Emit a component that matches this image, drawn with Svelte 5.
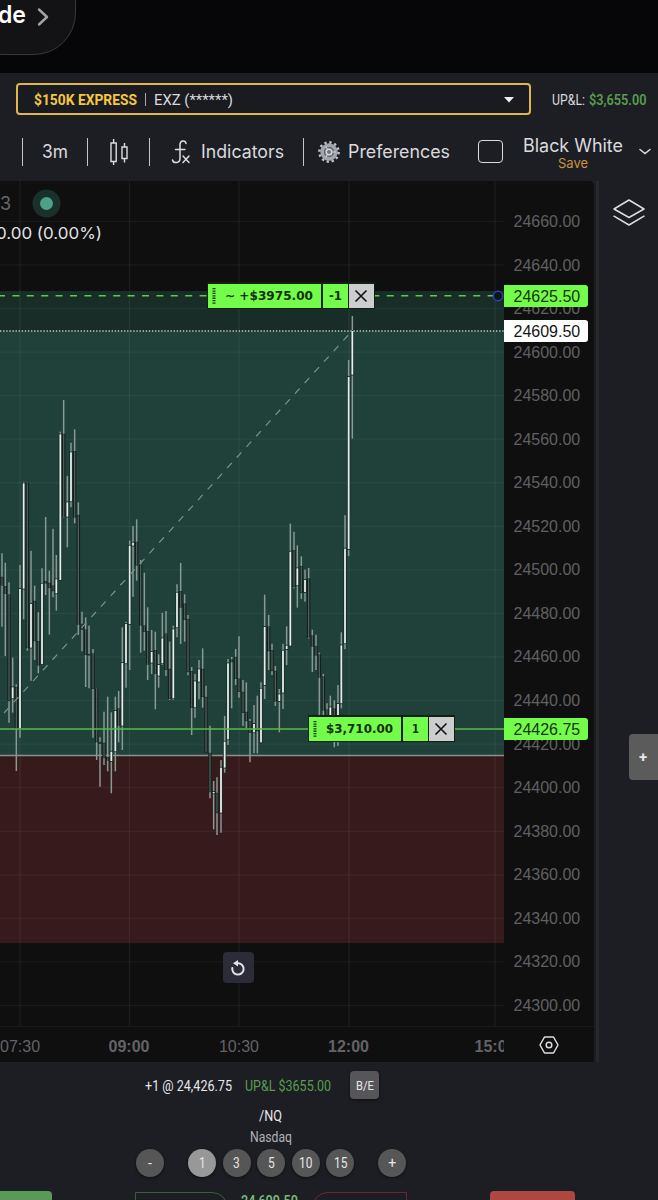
<script>
  // Candles: [x, high, low, body top, body bottom, rising]
  const scale = (rows, ox, oy) =>
    rows.map(([x, h, l, t, b, up]) => ({ x: ox + x / 3, h: oy + h / 3, l: oy + l / 3, t: oy + t / 3, b: oy + b / 3, up }));
  const morning = scale([
    [6,520,740,592,615,0],[16,548,828,620,640,0],[27,607,1028,645,962,0],[38,833,998,922,955,1],[49,913,1173,922,1046,0],
    [60,555,1073,627,1046,1],[71,305,718,310,626,1],[82,308,812,310,803,0],[93,512,902,672,803,1],[104,617,840,664,782,0],
    [115,697,880,785,855,0],[126,565,856,611,852,1],[137,411,645,605,609,0],[148,572,764,610,622,0],[159,446,652,618,632,0],
    [169,525,692,598,640,1],[181,155,600,163,600,1],[191,60,412,163,408,0],[202,288,502,367,410,1],[213,188,382,217,364,1],
    [224,148,430,215,411,0],[235,367,765,406,732,0],[246,695,814,733,748,0],[257,712,921,750,823,0],[267,737,925,823,825,0],
    [279,807,1073,822,925,0],[290,925,1140,927,1085,0],[300,1072,1220,1087,1090,0],[312,995,1155,1090,1133,0],
    [323,950,1174,1133,1140,0],[334,997,1240,1115,1143,1],[346,950,1174,993,1114,1],[356,933,1087,987,1035,0],
    [367,742,1110,849,1037,1],[378,725,923,732,850,1]
  ], 0, 380);
  const midday = scale([
    [29,122,510,137,372,1],[39,78,290,128,137,1],[50,58,242,127,195,0],[62,180,458,195,375,0],[73,218,452,378,394,0],
    [83,322,540,395,492,0],[95,390,522,456,488,1],[106,395,628,452,520,0],[116,463,563,495,527,1],[127,338,495,415,490,1],
    [138,333,528,402,508,0],[149,425,600,508,595,0],[160,377,600,388,595,1],[171,253,412,278,382,1],[182,189,432,275,321,0],
    [194,283,425,312,358,0],[204,345,526,358,515,0],[215,501,705,515,622,0],[225,522,653,544,622,1],[237,480,598,508,545,1],
    [248,445,623,508,590,0],[258,557,755,592,757,0],[270,677,895,760,875,0],[281,843,988,876,880,1],[291,832,1005,880,938,0],
    [303,780,998,803,938,1],[314,648,818,725,803,1],[324,477,735,490,718,1],[335,471,625,480,485,0],[347,447,555,472,535,0],
    [357,409,593,537,574,0],[369,540,678,577,637,0],[379,547,685,637,662,0]
  ], 120, 500);
  const noon = scale([
    [30,657,787,665,697,0],[42,615,760,672,697,1],[52,587,760,687,692,0],[63,547,728,566,727,1],[74,284,597,381,555,1],
    [86,345,510,381,452,0],[96,431,525,452,512,0],[106,498,618,514,603,0],[118,567,697,583,603,1],[129,431,627,452,578,1],
    [140,379,495,437,447,1],[151,71,437,155,437,1],[162,95,265,152,260,0],[172,136,323,205,256,1],[184,169,297,200,278,0],
    [195,209,305,240,276,1],[206,204,416,237,411,0],[217,389,516,408,438,0],[228,404,510,440,465,0],[238,458,645,465,531,0],
    [250,522,680,531,630,0],[261,610,680,630,650,0],[271,587,700,622,680,1],[283,601,742,627,700,0],[294,555,738,612,720,1],
    [304,397,625,436,610,1],[315,46,448,146,430,1],[326,-420,168,-369,147,1],[337,-552,-184,-507,-376,1]
  ], 240, 500);
  const candles = [...morning, ...midday, ...noon];

  const prices = Array.from({ length: 19 }, (_, i) => 24660 - i * 20);
  const columns = [20, 129.5, 239, 349, 495];
  const times = [
    { x: 20, label: '07:30' }, { x: 129, label: '09:00', major: true }, { x: 239, label: '10:30' },
    { x: 348.5, label: '12:00', major: true }, { x: 495, label: '15:00', major: true }
  ];
  const rowStep = 43.56;
  const firstRow = 221;
  let quantity = $state('1');
</script>

{#snippet fit(text, width, size, cls)}
  <svg class="fit {cls}" {width} height={size * 1.2}>
    <text x="0" y={size * 0.96} font-size={size} textLength={width} lengthAdjust="spacingAndGlyphs">{text}</text>
  </svg>
{/snippet}

{#snippet cross()}
  <svg width="14" height="14" viewBox="0 0 14 14"><path d="M1.500 1.500l11 11M12.500 1.500l-11 11" stroke="#111" stroke-width="1.600" /></svg>
{/snippet}

{#snippet grip()}
  <svg width="4" height="16" viewBox="0 0 4 16"><path d="M2 0v16" stroke="#173d10" stroke-width="3" stroke-dasharray="1.300 1.100" /></svg>
{/snippet}

<div class="page">
  <header>
    <div class="pill">
      {@render fit('de', 28, 24, 'inter semi')}
      <svg width="14" height="20" viewBox="0 0 14 20"><path d="M2 2.500l8 7.500-8 7.500" fill="none" stroke="#a3a3a6" stroke-width="2.400" stroke-linecap="round" stroke-linejoin="round" /></svg>
    </div>
  </header>

  <div class="account">
    <div class="select">
      {@render fit('$150K EXPRESS', 103, 15.2, 'roboto bold gold')}
      <i></i>
      {@render fit('EXZ (******)', 79, 15.2, 'roboto light')}
      <svg class="caret" width="10" height="6"><path d="M0 0h10L5 5.600z" fill="#f0f0f2" /></svg>
    </div>
    <div class="upl">
      {@render fit('UP&L:', 33, 14, 'roboto light')}
      {@render fit('$3,655.00', 57.5, 14, 'roboto green semibold')}
    </div>
  </div>

  <div class="toolbar">
    <b class="sep s1"></b>
    <div class="t-interval">{@render fit('3m', 26, 18, 'inter tool')}</div>
    <b class="sep s2"></b>
    <svg class="t-candles" width="20" height="28" viewBox="0 0 20 28" fill="none" stroke="#dcdce0" stroke-width="1.400">
      <path d="M2 5h5.200v18.500H2zM4.600 1v4M4.600 23.500v3.500M13 9h5v11.500h-5zM15.500 5v4M15.500 20.500v4" />
    </svg>
    <b class="sep s3"></b>
    <svg class="t-fx" width="20" height="26" viewBox="0 0 20 26" fill="none" stroke="#dcdce0" stroke-width="1.500" stroke-linecap="round">
      <path d="M15 4.500C14.500 1 9.200.800 9 5.500V19.500C9 24.500 2.500 24.800 1.500 21M4.500 10.500H14M12 17l6 6.500M18 17l-6 6.500" />
    </svg>
    <div class="t-ind">{@render fit('Indicators', 83, 18, 'inter tool')}</div>
    <b class="sep s4"></b>
    <svg class="t-gear" width="22" height="22" viewBox="-11 -11 22 22" fill="none">
      <circle r="9.600" stroke="#bfc2c6" stroke-width="2.600" stroke-dasharray="2.300 2.726" />
      <circle r="6.800" stroke="#a2a6ab" stroke-width="3.800" />
      <circle r="5" fill="#6a6e74" />
      <circle r="2.800" fill="#70757b" stroke="#d5d8dc" stroke-width="1.500" />
      <path d="M3.500 0h3M-1.800 3l-1.400 2.600M-1.800-3l-1.400-2.600" stroke="#c3c6ca" stroke-width="1.400" />
    </svg>
    <div class="t-pref">{@render fit('Preferences', 102, 18, 'inter tool')}</div>
    <span class="box"></span>
    <div class="layout">
      {@render fit('Black White', 100, 18, 'inter tool')}
      {@render fit('Save', 30, 13.4, 'inter save')}
    </div>
    <svg class="t-chev" width="12" height="7"><path d="M1 1.500l5 4 5-4" fill="none" stroke="#dcdce0" stroke-width="1.500" stroke-linecap="round" /></svg>
  </div>

  <main>
    <section class="chart">
      <div class="plot">
        <svg class="canvas" width="504" height="845" viewBox="0 181 504 845">
          <rect x="0" y="291" width="504" height="40" fill="#192d28" />
          <rect x="0" y="331" width="504" height="424" fill="#1f4139" />
          <rect x="0" y="755" width="504" height="188" fill="#371a1c" />
          {#each columns as x}<path d="M{x} 181V1026" stroke="#fff" stroke-opacity=".055" stroke-width="1.300" />{/each}
          {#each prices as p, i}<path d="M0 {firstRow + .4 + i * rowStep}H504" stroke="#fff" stroke-opacity=".045" stroke-width="1.300" />{/each}
          <path d="M0 755.500H504" stroke="#8b918f" stroke-width="1.300" />
          {#each candles as c}
            <path d="M{c.x} {c.h}V{c.l}" stroke="#899994" stroke-width="1.500" />
            {#if c.up}
              <rect x={c.x - 1.700} y={c.t - .8} width="3.400" height={Math.max(2, c.b - c.t + 1.600)} fill="#142b26" />
              <rect x={c.x - .9} y={c.t} width="1.800" height={Math.max(1, c.b - c.t)} fill="#e6eeea" />
            {:else}
              <rect x={c.x - 1.700} y={c.t - .5} width="3.400" height={Math.max(1.500, c.b - c.t + 1)} fill="#13211e" />
              <rect x={c.x - .6} y={c.t} width="1.200" height={Math.max(.5, c.b - c.t)} fill="#55605e" />
            {/if}
          {/each}
          <path d="M4 713L352 331" stroke="#7c928b" stroke-width="1.200" stroke-dasharray="7 7.400" />
          <path d="M0 331H504" stroke="#b9c7c2" stroke-width="1.300" stroke-dasharray="1.400 1.700" />
          <path d="M0 295.700H494" stroke="#61c84a" stroke-width="1.500" stroke-dasharray="7 7.400" stroke-dashoffset="2" />
          <path d="M0 729H504" stroke="#57bb45" stroke-width="1.700" />
          <circle cx="498" cy="296" r="4.700" fill="#0d1518" stroke="#2e41b5" stroke-width="1.500" />
        </svg>
        <div class="legend">
          <div class="symbol"><span>3</span><i></i></div>
          {@render fit('0.00 (0.00%)', 106, 16.2, 'inter change')}
        </div>
        <div class="order top">
          <div class="pnl">{@render grip()}{@render fit('~ +$3975.00', 88, 12.4, 'dejavu')}</div>
          <div class="qty">{@render fit('-1', 13, 12.4, 'dejavu')}</div>
          <div class="close">{@render cross()}</div>
        </div>
        <div class="order position">
          <div class="pnl">{@render grip()}{@render fit('$3,710.00', 67, 12.4, 'dejavu')}</div>
          <div class="qty">{@render fit('1', 7, 12.4, 'dejavu')}</div>
          <div class="close">{@render cross()}</div>
        </div>
        <div class="reset">
          <svg width="18" height="18" viewBox="0 0 18 18"><path d="M7 4.200H9.500A5.700 5.700 0 1 1 3.300 9" fill="none" stroke="#e1e2e8" stroke-width="2" stroke-linecap="round" /><path d="M4 4.200L9 1v6.400z" fill="#e1e2e8" /></svg>
        </div>
      </div>
      <div class="axis">
        {#each prices as p}<div class="price">{p.toFixed(2)}</div>{/each}
        <div class="tag t1">24625.50</div>
        <div class="tag t2">24609.50</div>
        <div class="tag t3">24426.75</div>
      </div>
      <div class="times">
        <svg width="504" height="36">
          {#each times as t}<text x={t.x} y="24.500" text-anchor="middle" class:major={t.major}>{t.label}</text>{/each}
        </svg>
      </div>
      <div class="corner">
        <svg width="20" height="18" viewBox="0 0 20 18" fill="none" stroke="#dcdce0" stroke-width="1.500"><path d="M5.500 1h9L19 9l-4.500 8h-9L1 9z" stroke-linejoin="round" /><circle cx="10" cy="9" r="2.800" /></svg>
      </div>
    </section>
    <div class="rail"></div>
    <aside>
      <svg width="32" height="27" viewBox="0 0 32 27" fill="none" stroke="#dcdce0" stroke-width="1.500" stroke-linejoin="round" stroke-linecap="round"><path d="M16 1l15 9-15 8.500L1 10zM1 17.200L16 26l15-8.800" /></svg>
      <button class="add">+</button>
    </aside>
  </main>

  <footer>
    <div class="status">
      {@render fit('+1 @ 24,426.75', 87, 14.3, 'roboto')}
      {@render fit('UP&L $3655.00', 86, 14.3, 'roboto green')}
      <button class="be">{@render fit('B/E', 18, 13.5, 'roboto')}</button>
    </div>
    <div class="name">{@render fit('/NQ', 23, 14.5, 'roboto')}</div>
    <div class="sub">{@render fit('Nasdaq', 42, 14, 'roboto dim')}</div>
    <div class="sizes">
      <button class="minus">-</button>
      {#each ['1', '3', '5', '10', '15'] as q}
        <button class:active={quantity === q} onclick={() => (quantity = q)}>{@render fit(q, q.length * 6.7, 14, 'roboto')}</button>
      {/each}
      <button class="plus">+</button>
    </div>
    <div class="trade">
      <div class="buy"></div>
      <div class="bid"></div>
      <div class="last">{@render fit('24,609.50', 57, 14.5, 'roboto pale semibold')}</div>
      <div class="ask"></div>
      <div class="sell"></div>
    </div>
  </footer>
</div>

<style>
  :global(body) { margin: 0; background: #1d1e23; }
  .page { width: 658px; height: 1200px; overflow: hidden; background: #1d1e23; color: #dedee2; font-family: Roboto, sans-serif; }
  svg { display: block; flex: none; }
  button { border: 0; padding: 0; margin: 0; font-family: Roboto, sans-serif; color: #e8e8ea; }
  .fit { overflow: visible; fill: #e6e6e9; }
  .inter { font-family: Inter, sans-serif; }
  .semi { font-weight: 600; fill: #fff; }
  .roboto { font-family: Roboto, sans-serif; }
  .bold { font-weight: 700; }
  .semibold { font-weight: 600; }
  .light { fill: #d9d9dc; }
  .gold { fill: #f3c83e; }
  .green { fill: #579c50; }
  .pale { fill: #79b779; }
  .dim { fill: #b1b1b5; }
  .tool { fill: #dadade; }
  .save { fill: #cb943c; }
  .dejavu { font-family: "DejaVu Sans", sans-serif; font-weight: 700; fill: #12300c; }
  .change { fill: #e2e2e4; }

  header { height: 73px; background: #060609; overflow: hidden; }
  .pill { box-sizing: border-box; width: 116px; height: 96px; margin: -41px 0 0 -40px; padding: 41px 0 0 37px; display: flex; gap: 11px; background: #131316; border: 1px solid #38383b; border-radius: 42px; }
  .pill .fit { margin-top: -1px; }
  .pill svg:last-child { margin-top: 6px; }

  .account { height: 50px; display: flex; align-items: center; box-sizing: border-box; padding: 3px 11px 0 16px; border-bottom: 1px solid #1b1c20; }
  .select { box-sizing: border-box; width: 515px; height: 32px; border: 2px solid #dfb54e; border-radius: 4px; padding: 1px 15px 0 16px; display: flex; align-items: center; background: #1a1b20; }
  .select i { width: 1px; height: 13px; background: #a8a8ac; margin: 0 8px; }
  .caret { margin-left: auto; }
  .upl { display: flex; gap: 4px; margin-left: 21px; padding-top: 2px; }

  .toolbar { height: 58px; display: flex; align-items: center; box-sizing: border-box; padding: 0 0 1px 21.500px; }
  .sep { width: 1.500px; height: 28px; background: #c6c6ca; flex: none; }
  .t-interval { margin: 0 18.500px 0 19px; }
  .t-candles { margin: 0 19.500px 0 21px; }
  .t-fx { margin-left: 20.500px; }
  .t-ind { margin: 0 18.500px 0 10.500px; }
  .t-gear { margin-left: 13.500px; }
  .t-pref { margin-left: 8px; }
  .box { box-sizing: border-box; width: 25px; height: 23px; border: 1.500px solid #dcdce0; border-radius: 4px; margin-left: 28px; flex: none; }
  .layout { margin: 3px 0 0 20px; width: 100px; display: flex; flex-direction: column; align-items: center; }
  .layout .save { margin-top: -2px; }
  .t-chev { margin-left: 16px; }

  main { height: 881px; display: grid; grid-template-columns: 594px 5px 59px; }
  .chart { display: grid; grid-template: 845px 36px / 504px 90px; background: #0f0f10; border-radius: 0 5px 0 0; overflow: hidden; }
  .plot { position: relative; overflow: hidden; }
  .legend { position: absolute; left: 0; top: 8px; }
  .legend :global(.change) { margin: 6px 0 0 -4px; }
  .symbol { display: flex; align-items: center; gap: 21px; height: 28px; font: 18px Inter, sans-serif; color: #68686b; }
  .symbol span { width: 11px; }
  .symbol i { width: 13px; height: 13px; border-radius: 50%; background: #4da189; box-shadow: 0 0 0 7.500px #1a302a; margin-left: 7.500px; }
  .order { position: absolute; display: flex; height: 24px; padding: 1.500px; gap: 1.500px; background: #12210f; }
  .order > div { display: flex; align-items: center; justify-content: center; background: #73fd4a; }
  .order .pnl { justify-content: flex-start; gap: 9px; padding-left: 3.500px; box-sizing: border-box; }
  .order .qty { width: 25px; }
  .order .close { width: 24.500px; background: #cbcdce; }
  .top { left: 206.500px; top: 101px; }
  .top .pnl { width: 113px; }
  .position { left: 307.500px; top: 534px; }
  .position .pnl { width: 92px; }
  .reset { position: absolute; left: 222.500px; top: 771px; width: 31px; height: 31px; border-radius: 4px; background: #2b2c37; display: grid; place-items: center; }
  .axis { position: relative; padding-top: 19px; font: 16px/43.560px "Liberation Sans", Arial, sans-serif; color: #606062; overflow: hidden; }
  .price { height: 43.560px; padding-left: 9.500px; }
  .tag { position: absolute; left: 0; width: 74.500px; padding-left: 9.500px; height: 22px; line-height: 23px; border-radius: 0 3px 3px 0; background: #73fd4a; color: #17340f; }
  .t1 { top: 104px; }
  .t2 { top: 139px; background: #fff; color: #161616; }
  .t3 { top: 537px; }
  .times, .corner { border-top: 1px solid #18191f; box-sizing: border-box; }
  .times text { font: 16px "Liberation Sans", Arial, sans-serif; fill: #636366; }
  .times .major { font-weight: 700; }
  .corner { padding: 8.500px 0 0 35px; }
  .rail { background: linear-gradient(90deg, #1d1e23 0 2px, #27282e 2px 5px); }
  aside { display: flex; flex-direction: column; padding: 18px 0 0 14px; }
  .add { width: 45px; height: 46px; margin: 508px 0 0 16px; padding-right: 17px; border-radius: 4px 0 0 4px; background: #5b5b5b; font-weight: 700; font-size: 15px; }

  footer { height: 138px; box-sizing: border-box; padding-top: 9px; }
  .status { display: flex; align-items: center; height: 28px; margin-left: 145px; gap: 13px; }
  .status > .fit { margin-top: 2px; }
  .be { width: 29px; height: 28px; border-radius: 4px; background: #565658; margin-left: 6px; display: grid; place-items: center; box-shadow: 0 1px 3px #0008; }
  .name, .sub { width: 541px; display: flex; justify-content: center; }
  .name { margin-top: 8px; }
  .sub { margin-top: 5px; }
  .sizes { display: flex; gap: 6.600px; margin: 3px 0 0 136px; }
  .sizes button { width: 28px; height: 28px; border-radius: 50%; background: #565657; display: grid; place-items: center; font-size: 14px; box-shadow: 0 1px 3px #0008; }
  .sizes .active { background: #989899; }
  .sizes .minus { margin-right: 17.400px; }
  .sizes .plus { margin-left: 17.400px; }
  .trade { display: flex; align-items: flex-start; margin-top: 13.500px; }
  .buy { width: 52px; height: 30px; background: #589a56; border-radius: 0 4px 0 0; }
  .bid { box-sizing: border-box; width: 93px; height: 30px; margin: 1px 0 0 83px; border: 1px solid #35603a; border-radius: 0 16px 0 0; }
  .last { margin: 1px 14px 0 13px; }
  .ask { box-sizing: border-box; width: 95px; height: 30px; margin-top: 1px; border: 1px solid #67282f; border-radius: 16px 0 0 0; }
  .sell { width: 85px; height: 30px; margin-left: 83px; background: #ae4740; border-radius: 4px 4px 0 0; }
</style>
